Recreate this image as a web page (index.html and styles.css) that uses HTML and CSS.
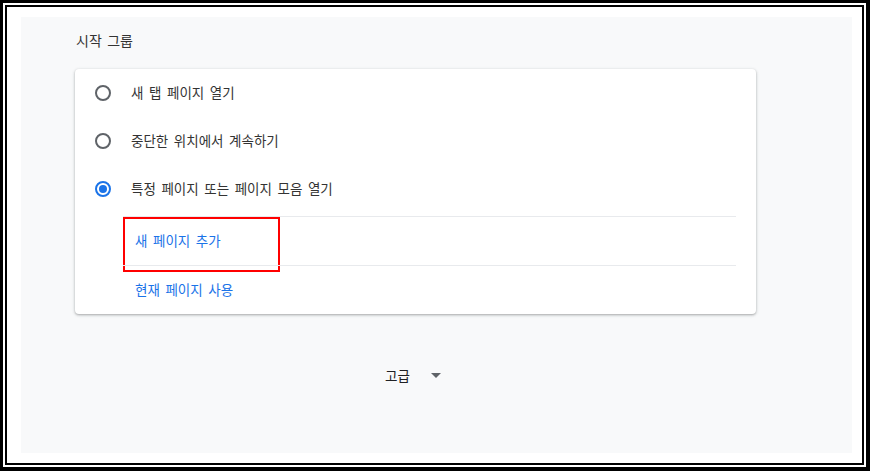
FILE: index.html
```html
<!DOCTYPE html>
<html lang="ko">
<head>
<meta charset="utf-8">
<link rel="stylesheet" href="styles.css">
</head>
<body>
<div class="frame">
  <div class="frame-inner">
    <div class="panel">
      <div class="section-title">시작 그룹</div>
      <div class="card">
        <div class="radio-group">
          <div class="radio-row">
            <span class="radio"></span>
            <span class="label">새 탭 페이지 열기</span>
          </div>
          <div class="radio-row">
            <span class="radio"></span>
            <span class="label">중단한 위치에서 계속하기</span>
          </div>
          <div class="radio-row">
            <span class="radio checked"></span>
            <span class="label">특정 페이지 또는 페이지 모음 열기</span>
          </div>
        </div>
        <div class="links">
          <div class="link-row"><span class="link">새 페이지 추가</span><span class="highlight"></span></div>
          <div class="link-row"><span class="link">현재 페이지 사용</span></div>
        </div>
      </div>
      <div class="advanced">
        <span class="advanced-label">고급</span>
        <svg class="arrow" width="10" height="5" viewBox="0 0 10 5"><path d="M0 0 L10 0 L5 5 Z" fill="#5f6368"/></svg>
      </div>
    </div>
  </div>
</div>
</body>
</html>
```
FILE: styles.css
```css
* { box-sizing: border-box; }
html, body { margin: 0; padding: 0; background: #fff; }
body {
  font-family: "Noto Sans CJK KR", "Noto Sans", sans-serif;
  width: 870px;
  height: 471px;
}
.frame {
  width: 870px;
  height: 471px;
  border-style: solid;
  border-color: #000;
  border-width: 3px 4px 4px 3px;
  padding: 2px;
  background: #fff;
}
.frame-inner {
  width: 100%;
  height: 100%;
  border: 2px solid #000;
  background: #fff;
  padding: 10px 10px 10px 14px;
}
.panel {
  height: 100%;
  background: #f8f9fa;
  padding: 12px 96px 0 54px;
}
.section-title {
  font-size: 14px;
  line-height: 22px;
  color: #333;
  word-spacing: 1.5px;
  margin-left: 1px;
  margin-bottom: 18px;
}
.card {
  background: #fff;
  border-radius: 4px;
  box-shadow: 0 1px 2px rgba(60,64,67,0.3), 0 1px 3px 1px rgba(60,64,67,0.12);
}
.radio-group { padding-bottom: 3px; }
.radio-row {
  height: 48px;
  display: flex;
  align-items: center;
  padding-left: 20px;
}
.radio {
  width: 16px;
  height: 16px;
  border-radius: 50%;
  border: 2px solid #5f6368;
  display: flex;
  align-items: center;
  justify-content: center;
  flex: none;
}
.radio.checked { border-color: #1a73e8; }
.radio.checked::after {
  content: "";
  width: 8px;
  height: 8px;
  border-radius: 50%;
  background: #1a73e8;
}
.label {
  margin-left: 20px;
  margin-bottom: 2px;
  font-size: 13.5px;
  line-height: 18px;
  color: #333;
  word-spacing: 1.8px;
}
.links { padding: 0 20px 0 48px; }
.link-row {
  position: relative;
  height: 49px;
  border-top: 1px solid #e8eaed;
  display: flex;
  align-items: center;
  padding-left: 12px;
  padding-bottom: 2px;
}
.link {
  font-size: 13.5px;
  line-height: 18px;
  color: #1a73e8;
  word-spacing: 1.8px;
}
.highlight {
  position: absolute;
  left: 0;
  top: 0;
  width: 157px;
  height: 55px;
  border: 2px solid #f00;
}
.advanced {
  display: flex;
  align-items: center;
  justify-content: center;
  margin-top: 52px;
  padding-right: 5px;
  gap: 21px;
}
.advanced-label {
  font-size: 13.5px;
  line-height: 18px;
  color: #202124;
}
.arrow { display: block; margin-top: 1px; }
```
